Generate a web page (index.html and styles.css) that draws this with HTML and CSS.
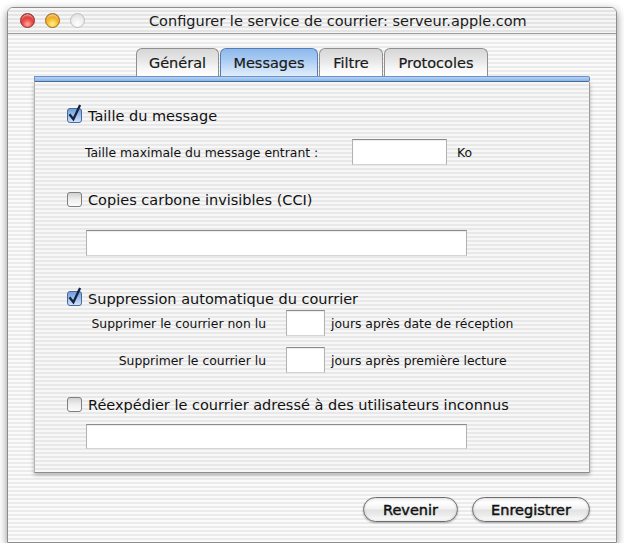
FILE: index.html
```html
<!DOCTYPE html>
<html lang="fr">
<head>
<meta charset="utf-8">
<title>Configurer le service de courrier</title>
<link rel="stylesheet" href="styles.css">
</head>
<body>
<div class="window">
  <div class="titlebar">
    <span class="light light-red"></span>
    <span class="light light-yellow"></span>
    <span class="light light-gray"></span>
    <span class="title">Configurer le service de courrier: serveur.apple.com</span>
  </div>
  <div class="content">
    <div class="tabs">
      <div class="tab tab-general">Général</div>
      <div class="tab tab-messages active">Messages</div>
      <div class="tab tab-filtre">Filtre</div>
      <div class="tab tab-protocoles">Protocoles</div>
    </div>
    <div class="tabbar"></div>
    <div class="panel">
      <div class="row check-row row-a">
        <svg class="cb" width="16" height="18" viewBox="0 0 16 18"><defs><linearGradient id="gb1" x1="0" y1="0" x2="0" y2="1"><stop offset="0" stop-color="#6f9bd8"/><stop offset="0.5" stop-color="#9dc0ee"/><stop offset="1" stop-color="#d3e5fa"/></linearGradient></defs><rect x="0.5" y="3.5" width="14" height="14" rx="2.5" fill="url(#gb1)" stroke="#4a6a9c"/><path d="M3.2 10.2 L6.4 14.3 L12.6 1" fill="none" stroke="#17233f" stroke-width="2.3" stroke-linecap="square" stroke-linejoin="miter"/></svg>
        <span class="cb-label">Taille du message</span>
      </div>
      <div class="row field-row row-b">
        <span class="small lbl-max">Taille maximale du message entrant :</span>
        <span class="input input-size"></span>
        <span class="small unit">Ko</span>
      </div>
      <div class="row check-row row-c">
        <svg class="cb" width="16" height="18" viewBox="0 0 16 18"><defs><linearGradient id="gw1" x1="0" y1="0" x2="0" y2="1"><stop offset="0" stop-color="#cfcfcf"/><stop offset="0.5" stop-color="#eeeeee"/><stop offset="1" stop-color="#fdfdfd"/></linearGradient></defs><rect x="0.5" y="3.5" width="14" height="14" rx="2.5" fill="url(#gw1)" stroke="#7f7f7f"/></svg>
        <span class="cb-label">Copies carbone invisibles (CCI)</span>
      </div>
      <div class="row wide-row row-d">
        <span class="input input-wide"></span>
      </div>
      <div class="row check-row row-e">
        <svg class="cb" width="16" height="18" viewBox="0 0 16 18"><defs><linearGradient id="gb2" x1="0" y1="0" x2="0" y2="1"><stop offset="0" stop-color="#6f9bd8"/><stop offset="0.5" stop-color="#9dc0ee"/><stop offset="1" stop-color="#d3e5fa"/></linearGradient></defs><rect x="0.5" y="3.5" width="14" height="14" rx="2.5" fill="url(#gb2)" stroke="#4a6a9c"/><path d="M3.2 10.2 L6.4 14.3 L12.6 1" fill="none" stroke="#17233f" stroke-width="2.3" stroke-linecap="square" stroke-linejoin="miter"/></svg>
        <span class="cb-label">Suppression automatique du courrier</span>
      </div>
      <div class="row days-row row-f">
        <span class="small lbl-days">Supprimer le courrier non lu</span>
        <span class="input input-days"></span>
        <span class="small after">jours après date de réception</span>
      </div>
      <div class="row days-row row-g">
        <span class="small lbl-days">Supprimer le courrier lu</span>
        <span class="input input-days"></span>
        <span class="small after">jours après première lecture</span>
      </div>
      <div class="row check-row row-h">
        <svg class="cb" width="16" height="18" viewBox="0 0 16 18"><defs><linearGradient id="gw2" x1="0" y1="0" x2="0" y2="1"><stop offset="0" stop-color="#cfcfcf"/><stop offset="0.5" stop-color="#eeeeee"/><stop offset="1" stop-color="#fdfdfd"/></linearGradient></defs><rect x="0.5" y="3.5" width="14" height="14" rx="2.5" fill="url(#gw2)" stroke="#7f7f7f"/></svg>
        <span class="cb-label">Réexpédier le courrier adressé à des utilisateurs inconnus</span>
      </div>
      <div class="row wide-row row-i">
        <span class="input input-wide"></span>
      </div>
    </div>
    <div class="buttons">
      <div class="btn btn-revert">Revenir</div>
      <div class="btn btn-save">Enregistrer</div>
    </div>
  </div>
</div>
</body>
</html>
```
FILE: styles.css
```css
html, body {
  margin: 0;
  padding: 0;
  background: #ffffff;
}
body {
  font-family: "DejaVu Sans", "Noto Sans", sans-serif;
  color: #111;
}
.window {
  margin: 7px 0 0 7px;
  width: 610px;
  height: 536px;
  box-sizing: border-box;
  border: 1px solid #8d8d8d;
  border-radius: 6px 6px 0 0;
  background: repeating-linear-gradient(to bottom, #fbfbfb 0, #fbfbfb 2px, #ebebeb 2px, #ebebeb 4px);
  box-shadow: 0 3px 9px rgba(0,0,0,0.45);
  overflow: hidden;
}
.titlebar {
  height: 25px;
  border-bottom: 1px solid #9c9c9c;
  display: flex;
  align-items: center;
  padding-left: 12px;
  background: repeating-linear-gradient(to bottom, #f6f6f6 0, #f6f6f6 2px, #e4e4e4 2px, #e4e4e4 4px);
}
.light {
  width: 15px;
  height: 15px;
  border-radius: 50%;
  box-sizing: border-box;
  margin-right: 10px;
  flex: none;
}
.light-red {
  border: 1px solid #8e2a2a;
  background: radial-gradient(circle at 50% 78%, #ffb0a8 0, #f0514b 38%, #c8201e 75%, #9e1a18 100%);
  box-shadow: inset 0 3px 2px -1px rgba(255,255,255,0.55);
}
.light-yellow {
  border: 1px solid #9a6a10;
  background: radial-gradient(circle at 50% 78%, #fff1a0 0, #f9c230 40%, #e08a0a 78%, #b8700a 100%);
  box-shadow: inset 0 3px 2px -1px rgba(255,255,255,0.55);
}
.light-gray {
  border: 1px solid #bdbdbd;
  background: radial-gradient(circle at 50% 75%, #ffffff 0, #eeeeee 50%, #d9d9d9 100%);
  margin-right: 0;
}
.title {
  margin-left: 64px;
  font-size: 14.5px;
  color: #1a1a1a;
  white-space: nowrap;
}
.content {
  padding: 14px 26px 0 26px;
}
.tabs {
  display: flex;
  justify-content: center;
  gap: 1px;
  height: 28px;
}
.tab {
  box-sizing: border-box;
  height: 28px;
  border: 1px solid #8f8f8f;
  border-bottom: none;
  border-radius: 6px 6px 0 0;
  background: linear-gradient(to bottom, #d6d6d6 0, #e8e8e8 45%, #f6f6f6 70%, #ffffff 100%);
  display: flex;
  align-items: center;
  justify-content: center;
  font-size: 14.5px;
  color: #1a1a1a;
  padding-top: 1px;
  -webkit-text-stroke: 0.2px #1a1a1a;
}
.tab-general { width: 83px; }
.tab-messages { width: 98px; }
.tab-filtre { width: 64px; }
.tab-protocoles { width: 104px; }
.tab.active {
  border-color: #557cb4;
  background: linear-gradient(to bottom, #8db8ec 0, #a9cbf2 40%, #c7ddf7 70%, #e0eefc 100%);
}
.tabbar {
  height: 6px;
  box-sizing: border-box;
  border-top: 1px solid #6b93cb;
  border-bottom: 1px solid #4c6ea2;
  border-right: 1px solid #5a80b8;
  border-left: 1px solid #6b93cb;
  border-radius: 0 2px 2px 0;
  background: linear-gradient(to bottom, #b4d2f5, #8fb7e9);
}
.panel {
  border-left: 1px solid #b3b3b3;
  border-right: 1px solid #9d9d9d;
  border-bottom: 1px solid #8c8c8c;
  background: repeating-linear-gradient(to bottom, #f7f7f7 0, #f7f7f7 2px, #e8e8e8 2px, #e8e8e8 4px);
  box-shadow: 0 2px 4px rgba(0,0,0,0.28);
  padding: 24px 0 23px 32px;
}
.row {
  display: flex;
  align-items: center;
}
.check-row { height: 20px; }
.cb {
  flex: none;
  overflow: visible;
  margin-top: -4px;
}
.cb-label {
  font-size: 14.5px;
  margin-left: 5px;
  white-space: nowrap;
}
.small {
  font-size: 12.4px;
  white-space: nowrap;
}
.input {
  display: block;
  box-sizing: border-box;
  background: #ffffff;
  border-top: 1px solid #8a8a8a;
  border-left: 1px solid #b2b2b2;
  border-right: 1px solid #b2b2b2;
  border-bottom: 1px solid #d4d4d4;
  box-shadow: inset 0 1px 1px rgba(0,0,0,0.08);
  flex: none;
}
.row-b { margin-top: 13px; height: 26px; }
.lbl-max { width: 267px; margin-left: 18px; }
.input-size { width: 95px; height: 26px; }
.unit { margin-left: 10px; }
.row-c { margin-top: 25px; }
.row-d { margin-top: 20px; height: 26px; }
.input-wide { width: 381px; height: 26px; margin-left: 19px; }
.row-e { margin-top: 33px; }
.days-row { height: 26px; }
.row-f { margin-top: 1px; }
.row-g { margin-top: 11px; }
.lbl-days { width: 181px; margin-left: 18px; text-align: right; }
.input-days { width: 39px; height: 26px; margin-left: 20px; }
.after { margin-left: 6px; }
.row-h { margin-top: 22px; }
.row-i { margin-top: 9px; height: 25px; }
.row-i .input-wide { height: 25px; }
.buttons {
  display: flex;
  justify-content: flex-end;
  gap: 14px;
  margin-top: 24px;
}
.btn {
  box-sizing: border-box;
  height: 25px;
  border: 1px solid #6c6c6c;
  border-radius: 13px;
  background: linear-gradient(to bottom, #f4f4f4 0, #ffffff 20%, #f1f1f1 48%, #e2e2e2 52%, #ececec 75%, #ffffff 100%);
  box-shadow: 0 1px 2px rgba(0,0,0,0.3), inset 0 0 3px rgba(0,0,0,0.18);
  display: flex;
  align-items: center;
  justify-content: center;
  font-size: 14.5px;
  color: #111;
  -webkit-text-stroke: 0.45px #111;
}
.btn-revert { width: 95px; }
.btn-save { width: 118px; }
```
